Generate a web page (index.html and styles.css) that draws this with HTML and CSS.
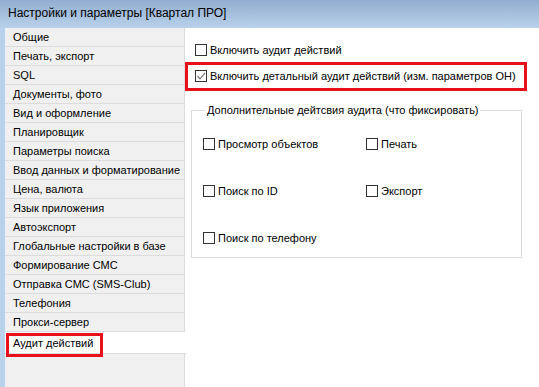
FILE: index.html
```html
<!DOCTYPE html>
<html lang="ru">
<head>
  <meta charset="UTF-8">
  <title>Настройки и параметры [Квартал ПРО]</title>
  <link rel="stylesheet" href="styles.css">
</head>
<body>
  <div class="window">
    <div class="titlebar">Настройки и параметры [Квартал ПРО]</div>
    <div class="content">
      <div class="edge"></div>
      <ul class="tabs">
        <li class="tab">Общие</li>
        <li class="tab">Печать, экспорт</li>
        <li class="tab">SQL</li>
        <li class="tab">Документы, фото</li>
        <li class="tab">Вид и оформление</li>
        <li class="tab">Планировщик</li>
        <li class="tab">Параметры поиска</li>
        <li class="tab">Ввод данных и форматирование</li>
        <li class="tab">Цена, валюта</li>
        <li class="tab">Язык приложения</li>
        <li class="tab">Автоэкспорт</li>
        <li class="tab">Глобальные настройки в базе</li>
        <li class="tab">Формирование СМС</li>
        <li class="tab">Отправка СМС (SMS-Club)</li>
        <li class="tab">Телефония</li>
        <li class="tab">Прокси-сервер</li>
        <li class="tab selected">Аудит действий<span class="mark"></span></li>
        <li class="tabs-rest"></li>
      </ul>
      <div class="panel">
        <label class="check top-check"><span class="box"></span>Включить аудит действий</label>
        <label class="check top-check marked">
          <span class="box">
            <svg width="10" height="10" viewBox="0 0 10 10"><polyline points="1.5,5 4,7.8 9,1.8" fill="none" stroke="#777" stroke-width="1.2"/></svg>
          </span>Включить детальный аудит действий (изм. параметров ОН)
          <span class="mark"></span>
        </label>
        <fieldset class="group">
          <legend>Дополнительные дейтсвия аудита (что фиксировать)</legend>
          <div class="grid">
            <label class="check"><span class="box"></span>Просмотр объектов</label>
            <label class="check"><span class="box"></span>Печать</label>
            <label class="check"><span class="box"></span>Поиск по ID</label>
            <label class="check"><span class="box"></span>Экспорт</label>
            <label class="check"><span class="box"></span>Поиск по телефону</label>
          </div>
        </fieldset>
      </div>
    </div>
  </div>
</body>
</html>
```

FILE: styles.css
```css
body {
  margin: 0;
  font-family: "Liberation Sans", Arial, sans-serif;
  font-size: 11px;
  color: #000;
  background-color: #fff;
}

.window {
  width: 539px;
  height: 387px;
  display: flex;
  flex-direction: column;
  overflow: hidden;
}

.titlebar {
  height: 28px;
  box-sizing: border-box;
  padding: 6px 0 0 8px;
  font-size: 12px;
  color: #000;
  background: linear-gradient(#92adcf, #b9d1ea);
}

.content {
  flex: 1;
  display: flex;
}

.edge {
  width: 5px;
  flex-shrink: 0;
  background-color: #b9d1ea;
}

.tabs {
  width: 180px;
  flex-shrink: 0;
  margin: 0;
  padding: 0;
  list-style: none;
  display: flex;
  flex-direction: column;
}

.tab {
  height: 18px;
  line-height: 19px;
  padding-left: 8px;
  background-color: #f0f0f0;
  border-bottom: 1px solid #dcdcdc;
  border-right: 1px solid #dcdcdc;
  white-space: nowrap;
}

.tab.selected {
  position: relative;
  height: 21px;
  line-height: 23px;
  background-color: #fff;
  border-right: none;
  border-bottom: 1px solid #dcdcdc;
  margin-right: -1px;
}

.tab.selected .mark {
  left: 1px;
  top: 1px;
  width: 91px;
  height: 18px;
}

.tabs-rest {
  flex: 1;
  background-color: #f0f0f0;
  border-right: 1px solid #dcdcdc;
}

.mark {
  position: absolute;
  border: 3px solid #e8111b;
}

.panel {
  flex: 1;
  min-width: 0;
  padding: 16px 0 0 10px;
}

.check {
  display: flex;
  align-items: center;
  height: 12px;
  white-space: nowrap;
}

.box {
  width: 10px;
  height: 10px;
  flex-shrink: 0;
  border: 1px solid #333;
  margin-right: 3px;
  background-color: #fff;
  display: flex;
  align-items: center;
  justify-content: center;
}

.top-check {
  margin-bottom: 14px;
}

.marked {
  position: relative;
  margin-bottom: 22px;
}

.marked .mark {
  left: -10px;
  top: -8px;
  width: 336px;
  height: 23px;
}

.group {
  width: 331px;
  height: 154px;
  box-sizing: border-box;
  margin: 0 0 0 -4px;
  padding: 0 0 0 11px;
  border: 1px solid #dcdcdc;
}

.group legend {
  padding: 0 1px;
  margin-left: 3px;
}

.grid {
  display: grid;
  grid-template-columns: 163px auto;
  row-gap: 35px;
  padding-top: 22px;
}
```
